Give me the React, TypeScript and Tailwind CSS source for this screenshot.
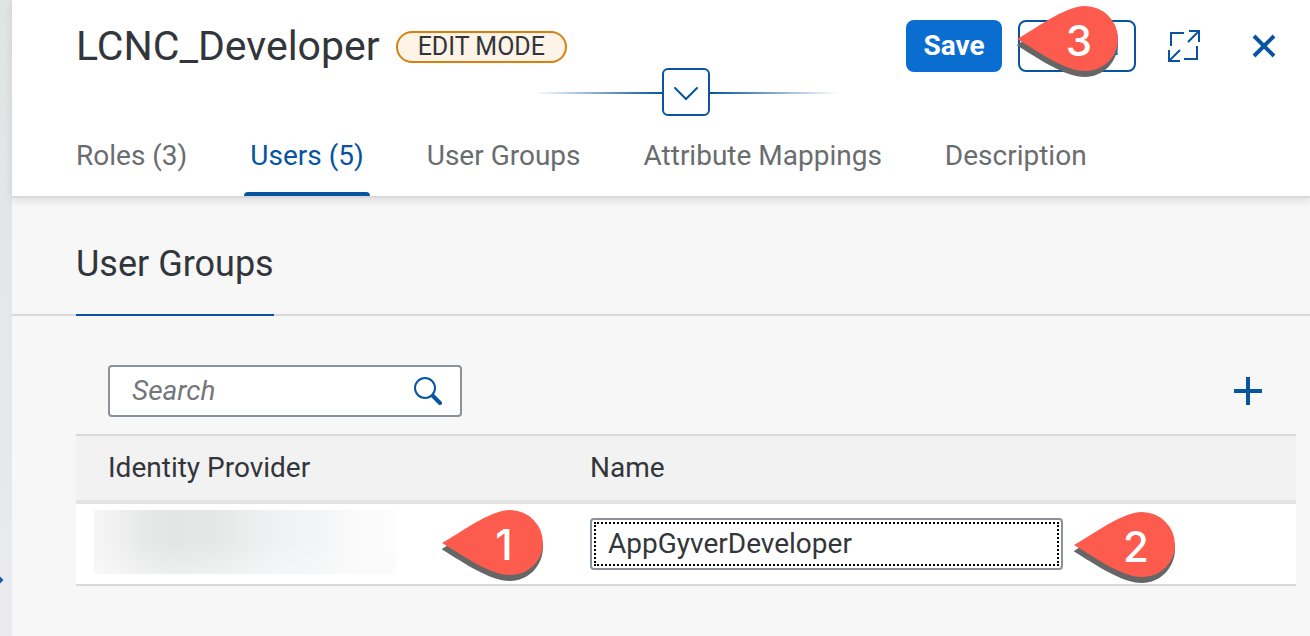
import React from 'react';

type MarkerProps = { value: string; className: string };

function Marker({ value, className }: MarkerProps) {
  return (
    <span className={`pointer-events-none absolute h-[73px] w-[103px] ${className}`}>
      <svg viewBox="0 0 103 73" className="absolute inset-0 h-full w-full" aria-hidden="true">
        <path
          d="M0 40C18 28 48 7 68 7A33 33 0 0 1 101 38C101 57 86 72 68 72C48 72 22 54 0 40.500Z"
          fill="#666666"
        />
        <path d="M0 34C18 24 48 1 68 1A33 33 0 0 1 101 34C101 51 87 66 68 66C48 66 22 47 0 34Z" fill="#fd5b4e" />
      </svg>
      <span className="relative ml-[34px] flex h-[72px] w-14 items-center justify-center font-[Inter,sans-serif] text-[42px] font-medium leading-none text-white">
        {value}
      </span>
    </span>
  );
}

const tabs = ['Roles (3)', 'Users (5)', 'User Groups', 'Attribute Mappings', 'Description'];

export default function App() {
  const [active, setActive] = React.useState('Users (5)');

  return (
    <div className="flex min-h-screen bg-[#f7f7f7] font-[Roboto,sans-serif] text-[28px] leading-9 text-[#32363a]">
      <aside className="flex w-3 shrink-0 flex-col justify-end overflow-hidden bg-linear-to-b from-[#dfe4e5] to-[#e9ebee] pb-[50px]">
        <svg viewBox="0 0 4 12" className="h-3 w-1" fill="none" stroke="#0854a0" strokeWidth="2" aria-hidden="true">
          <path d="M-1 3L2 6L-1 9" />
        </svg>
      </aside>

      <main className="min-w-0 flex-1">
        <header className="relative border-b-2 border-[#d9d9d9] bg-white pl-16 pr-3.5 shadow-[0_3px_8px_rgba(0,0,0,0.1)]">
          <div className="flex h-[72px] items-end">
            <div className="flex h-[52px] flex-1 items-center gap-4">
              <h1 className="text-[41px] leading-[52px]">LCNC_Developer</h1>
              <span className="mt-0.5 rounded-full border-2 border-[#d8800f] bg-[#fef3e7] px-5 text-[25px] leading-7">
                EDIT MODE
              </span>
            </div>
            <div className="flex items-center gap-4">
              <button className="h-[52px] w-24 rounded-lg bg-[#0a6ed1] font-bold text-white">Save</button>
              <button className="relative h-[52px] w-[118px] rounded-lg border-2 border-[#0854a0] bg-white text-[#0854a0]">
                Cancel
                <Marker value="3" className="-left-[3px] -top-[17px] z-10" />
              </button>
              <button aria-label="Full screen" className="flex h-[52px] w-16 items-center justify-center">
                <svg viewBox="0 0 32 32" className="size-8" fill="none" stroke="#0854a0" strokeWidth="2" aria-hidden="true">
                  <path d="M16 3H3V16M21 1H31V12M31 1L20 12M29 16V29H16M1 20V31H12M1 31L12 20" />
                </svg>
              </button>
              <button aria-label="Close" className="flex h-[52px] w-16 items-center justify-center">
                <svg viewBox="0 0 24 24" className="size-6" fill="none" stroke="#0854a0" strokeWidth="4" aria-hidden="true">
                  <path d="M2 2L22 22M22 2L2 22" />
                </svg>
              </button>
            </div>
          </div>

          <div className="-mt-1 flex items-center justify-center">
            <span className="mt-0.5 h-0.5 w-32 bg-linear-to-r from-transparent to-[#0854a0]" />
            <button
              aria-label="Expand header"
              className="flex size-12 items-center justify-center rounded-md border-2 border-[#0854a0] bg-white"
            >
              <svg viewBox="0 0 24 14" className="mt-1 h-3.5 w-6" fill="none" stroke="#0854a0" strokeWidth="2" strokeLinecap="round" aria-hidden="true">
                <path d="M1 1L12 12L23 1" />
              </svg>
            </button>
            <span className="mt-0.5 h-0.5 w-32 bg-linear-to-l from-transparent to-[#0854a0]" />
          </div>

          <nav className="-ml-1.5 flex gap-[51px]" role="tablist">
            {tabs.map((tab) => (
              <button
                key={tab}
                role="tab"
                aria-selected={tab === active}
                onClick={() => setActive(tab)}
                className={
                  tab === active
                    ? 'flex h-20 flex-col justify-between whitespace-nowrap text-[#0854a0]'
                    : 'flex h-20 flex-col justify-between whitespace-nowrap text-[#6a6d70]'
                }
              >
                <span className="px-1.5 pt-[22px]">{tab}</span>
                {tab === active && <span className="h-1 w-full rounded-t bg-[#0854a0]" />}
              </button>
            ))}
          </nav>
        </header>

        <section>
          <div className="flex border-b-2 border-[#d9d9d9] pl-16">
            <h2 className="-mb-0.5 h-[118px] border-b-2 border-[#0854a0] pt-11 text-4xl leading-[44px]">User Groups</h2>
          </div>

          <div className="pl-16 pr-3.5">
            <div className="flex items-center justify-between pb-[17px] pl-8 pr-[34px] pt-[49px]">
              <label className="flex h-[52px] w-[354px] items-center rounded border-2 border-[#89919a] bg-white pl-[22px] pr-[18px]">
                <input
                  type="search"
                  aria-label="Search"
                  placeholder="Search"
                  className="min-w-0 flex-1 bg-transparent outline-none placeholder:italic placeholder:text-[#74777a]"
                />
                <svg viewBox="0 0 28 28" className="size-7" fill="none" stroke="#0854a0" aria-hidden="true">
                  <circle cx="11" cy="11" r="10" strokeWidth="2" />
                  <path d="M19 19L26 26" strokeWidth="4" strokeLinecap="round" />
                </svg>
              </label>
              <button aria-label="Add user group">
                <svg viewBox="0 0 28 28" className="size-7" fill="none" stroke="#0854a0" strokeWidth="4" aria-hidden="true">
                  <path d="M14 0V28M0 14H28" />
                </svg>
              </button>
            </div>

            <table className="w-full table-fixed border-separate border-spacing-0 text-left">
              <thead>
                <tr className="bg-[#f2f2f2]">
                  <th className="w-[482px] border-b-4 border-t-2 border-b-[#e4e4e4] border-t-[#d9d9d9] px-8 py-3.5 font-normal">
                    Identity Provider
                  </th>
                  <th className="border-b-4 border-t-2 border-b-[#e4e4e4] border-t-[#d9d9d9] px-8 py-3.5 font-normal">
                    Name
                  </th>
                </tr>
              </thead>
              <tbody>
                <tr className="bg-white">
                  <td className="relative border-b-2 border-[#d9d9d9] pb-2.5 pl-[18px] pt-1.5 align-top">
                    <div className="h-16 w-[302px] bg-[linear-gradient(180deg,transparent_50%,rgba(250,250,250,0.5)_100%),linear-gradient(90deg,#f6f6f6_0%,#f0f0f0_8%,#e6e7e7_18%,#e3e4e4_26%,#e6e7e7_42%,#eceeee_52%,#f0f2f4_64%,#f3f4f6_74%,#fafafa_86%,#fcfcfc_100%)]" />
                    <Marker value="1" className="right-[13px] top-[5px]" />
                  </td>
                  <td className="relative border-b-2 border-[#d9d9d9] px-8">
                    <input
                      aria-label="Name"
                      defaultValue="AppGyverDeveloper"
                      className="block h-[52px] w-[473px] rounded border-2 border-[#89919a] bg-white px-4 pb-0.5 outline-2 -outline-offset-6 outline-dotted outline-black"
                    />
                    <Marker value="2" className="left-[516px] top-[7px]" />
                  </td>
                </tr>
              </tbody>
            </table>
          </div>
        </section>
      </main>
    </div>
  );
}
